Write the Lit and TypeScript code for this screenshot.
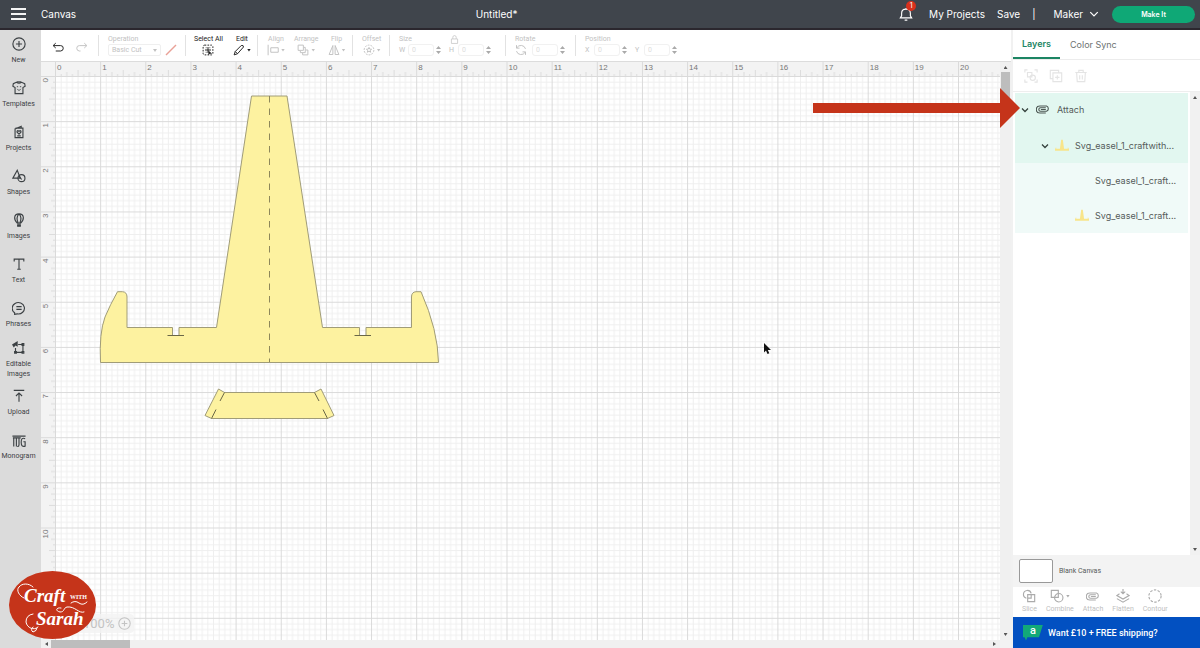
import { LitElement, html, svg, css, type TemplateResult } from "lit";
import { customElement, state } from "lit/decorators.js";
import { classMap } from "lit/directives/class-map.js";

/** Pixels per inch on the mat at the current zoom. */
const INCH = 45.15;

type Glyph = ReturnType<typeof svg>;

const icons: Record<string, Glyph> = {
  plus: svg`<circle cx="8" cy="8" r="7"/><path d="M8 4.500v7M4.500 8h7"/>`,
  shirt: svg`<path d="M5 1.500 1.500 3 1 6l2.500 1.500V14.500h9V7.500L15 6l-.5-3L11 1.500Q8 3.500 5 1.500Z"/><path d="M5.500 1h5"/><path d="M5.500 6.500h1.500M9 6.500h1.500M6 9l2 2 2-2" stroke-width="1"/>`,
  projects: svg`<path d="M4 3.500h8.500v11H3.500v-10l7-3v2"/><path d="M8 10.500 5.800 8.200q-.3-1.700 1-1.700L8 7.300l1.200-.8q1.300 0 1 1.700zM6 12.500h4"/>`,
  shapes: svg`<path d="M6 1.500 1 10.500h8.500z"/><circle cx="10.800" cy="10.500" r="4"/><path d="M8 8l3 4"/>`,
  images: svg`<path d="M8 1C1.500 1 2 8 6 11.500h4C14 8 14.500 1 8 1ZM8 1C5 4 5.500 8 7 11.500M8 1c3 3 2.500 7 1 10.500"/><path d="M6.500 13.500h3v1.500h-3z" fill="currentColor"/>`,
  text: svg`<path d="M2.500 5V2.500h11V5M8 2.500V14M6 14h4"/>`,
  phrases: svg`<path d="M3 13.500A7 6.500 0 1 1 6 14.700L3 15.300z"/><path d="M5 6.500h6M5 9.500h6"/>`,
  editable: svg`<path d="M7 4h5.500v9H4V8"/><path d="M0 4 6.500 0v6.500L4 5 2 7.500z" fill="currentColor" stroke="none"/><path d="M11.500 3h2v2h-2zM11.500 12h2v2h-2zM3 12h2v2H3z"/>`,
  upload: svg`<path d="M2 1.500h12M8 14.500V4.500M4.500 8 8 4.500 11.500 8"/>`,
  monogram: svg`<path d="M.5 3.500h15M1 5.500h9M2 5.500v10M5 5.500v10M8 5.500v8q0 2-2 2M15 6.500q-4.500-2-4.500 4t4.500 4.500v-5h-2"/>`,
  undo: svg`<path d="M5 1.500 1.500 4.800 5 8M2 4.800h9.500q3.500 0 3.500 3.500t-3.500 3.700H5"/>`,
  redo: svg`<path d="M11 1.500 14.500 4.800 11 8M14 4.800H4.500Q1 4.800 1 8.300T4.500 12H6"/>`,
  selectAll: svg`<rect x="1.500" y="1.500" width="13" height="13" rx="2" stroke-dasharray="2.200 1.600"/><path d="M8 4v8M4 8h8M5 5h1M10 5h1M5 11h1"/><path d="M8.500 8.500v6l2-1.500h3z" fill="currentColor" stroke="none"/>`,
  pencil: svg`<path d="M1.500 14.500 3 10 11 2q3-1 3 2L6 13zM3 10l3 3"/>`,
  align: svg`<path d="M1.500 1v14M5 5h10v6H5z"/>`,
  arrange: svg`<path d="M1.500 1.500h7v7h-7zM9 4.500h2v7H4.500V9M11.500 8h3v6.500h-7V12"/>`,
  flip: svg`<path d="M6.500 2 1.500 14h5zM9.500 2l5 12h-5z"/>`,
  offset: svg`<circle cx="8" cy="8" r="6.500" stroke-dasharray="2.500 1.500"/><path d="m8 4.500 1 2.300 2.500.2-1.900 1.600.6 2.400L8 9.700 5.800 11l.6-2.400L4.500 7 7 6.800z"/>`,
  lock: svg`<path d="M2.500 7h11v8h-11zM5 7V4q0-3 3-3t3 3v3"/>`,
  rotate: svg`<path d="M14 6.500A6.300 6.300 0 0 0 2.500 5M2 9.500A6.300 6.300 0 0 0 13.500 11M2 1.500V5.500h4M14 14.500v-4h-4"/>`,
  group: svg`<path d="M1 4V1h3M12 1h3v3M15 12v3h-3M4 15H1v-3"/><path d="M4 4h5v5H4z"/><circle cx="10" cy="10" r="3"/>`,
  duplicate: svg`<path d="M4.500 4.500h10v10h-10zM11 4V1.500H1.500V11H4M9.500 7v5M7 9.500h5"/>`,
  trash: svg`<path d="M1.500 4h13M5.500 4V1.500h5V4M3 4l.7 10.500h8.600L13 4M6.500 7v5M9.500 7v5"/>`,
  slice: svg`<path d="M5 10.500a4.500 4.500 0 1 1 5.500-5.500"/><path d="M6.500 6.500h8v8h-8zM6.500 10.500h4v-4"/>`,
  combine: svg`<path d="M1.500 1.500h8v8h-8z"/><circle cx="10" cy="10" r="4.800"/>`,
  flatten: svg`<path d="M8 0v5M5.500 3 8 5.500 10.500 3M4 5.500 1 7.500l7 4 7-4-3-2M1 11l7 4 7-4"/>`,
  contour: svg`<circle cx="8" cy="8" r="7" stroke-dasharray="2.800 1.600"/>`,
  chevron: svg`<path d="m2 5 6 6 6-6"/>`,
  bell: svg`<path d="M1.500 12.500h13L13 10V7Q13 2.500 8 2.500T3 7v3zM6.500 14.500q1.500 1.200 3 0M8 1v1"/>`,
};

const icon = (name: string, cls = "") => html`
  <svg class="icon ${cls}" viewBox="0 0 16 16" aria-hidden="true">${icons[name]}</svg>`;

const paperclip = () => html`
  <svg class="clip" viewBox="0 0 20 12" aria-hidden="true">
    <path d="M14 3.500H6.500a2.500 2.500 0 0 0 0 5h8.500a4 4 0 0 0 0-7.500H5.500a5 5 0 0 0 0 10H14M7 6h7"/>
  </svg>`;

const easelThumb = html`
  <svg class="thumb" viewBox="0 0 34 28" aria-hidden="true">
    <path d="M0 27V23L2 19h1v3h9L15 0h4L22 22h9v-3h1l2 4v4z"/>
  </svg>`;

const sideItems = [
  { name: "New", glyph: "plus" },
  { name: "Templates", glyph: "shirt" },
  { name: "Projects", glyph: "projects" },
  { name: "Shapes", glyph: "shapes" },
  { name: "Images", glyph: "images" },
  { name: "Text", glyph: "text" },
  { name: "Phrases", glyph: "phrases" },
  { name: "Editable Images", glyph: "editable" },
  { name: "Upload", glyph: "upload" },
  { name: "Monogram", glyph: "monogram" },
];

const layers = [
  { name: "Attach", depth: 0, open: true, art: "clip" },
  { name: "Svg_easel_1_craftwith...", depth: 1, open: true, art: "easel" },
  { name: "Svg_easel_1_craft...", depth: 2, open: false, art: "none" },
  { name: "Svg_easel_1_craft...", depth: 2, open: false, art: "easel" },
];

@customElement("app-root")
export class AppRoot extends LitElement {
  @state() private matWidth = 945;
  @state() private matHeight = 564;
  private observer?: ResizeObserver;

  static styles = css`
    :host {
      display: flex;
      flex-direction: column;
      position: relative;
      height: 100vh;
      overflow: hidden;
      background: #fff;
      color: #555b5a;
      font: 10px/14px Roboto, "Open Sans", sans-serif;
    }
    * { box-sizing: border-box; }
    button, input, select { font: inherit; color: inherit; margin: 0; padding: 0; border: 0; background: none; }
    a { color: inherit; text-decoration: none; }
    svg { display: block; flex: none; }
    .icon, .clip { width: 14px; height: 14px; fill: none; stroke: currentColor; stroke-width: 1.3; }
    .clip { width: 14px; height: 9px; stroke-width: 1.6; }

    header, .tabs, .layers { font-family: Inter, "Open Sans", sans-serif; }
    header {
      flex: none;
      display: flex;
      align-items: center;
      height: 30px;
      padding: 0 5px 0 11px;
      background: #40454c;
      border-bottom: 2px solid #2b272e;
      color: #fff;
    }
    .burger { display: flex; flex-direction: column; gap: 3px; width: 15px; margin-right: 15px; }
    .burger i { height: 2px; background: #f4f4f4; }
    h1, h2 { margin: 0; font: inherit; }
    h2 { flex: 1; text-align: center; padding-left: 18px; }
    .account { display: flex; align-items: center; gap: 12px; }
    .bell { position: relative; margin-right: 4px; color: #fff; }
    .count {
      position: absolute;
      left: 7px;
      top: -6px;
      width: 10px;
      height: 10px;
      border-radius: 5px;
      background: #d8301c;
      font-size: 7px;
      line-height: 10px;
      text-align: center;
    }
    .machine { display: flex; align-items: center; gap: 6px; margin: 0 1px 0 6px; }
    .machine .icon { width: 10px; height: 10px; stroke-width: 2; }
    .make {
      width: 83px;
      height: 17px;
      border-radius: 9px;
      background: #0fa876;
      font-size: 7px;
      line-height: 17px;
      font-weight: 600;
    }

    .body { flex: 1; min-height: 0; display: flex; }
    nav { flex: none; width: 41px; background: #dbdbdb; color: #3c4144; }
    .side {
      display: flex;
      flex-direction: column;
      align-items: center;
      gap: 4px;
      width: 37px;
      padding: 7px 0 9px;
      font-size: 7px;
      line-height: 10px;
      text-align: center;
    }
    .side.double { padding: 3px 0; }

    main { flex: 1; min-width: 0; display: flex; flex-direction: column; }
    .toolbar {
      flex: none;
      display: flex;
      align-items: center;
      height: 31px;
      color: #c2c2c2;
      font-size: 7px;
      line-height: 8px;
      overflow: hidden;
    }
    .section {
      flex: none;
      display: flex;
      align-items: stretch;
      height: 21px;
      padding-left: 9px;
      border-right: 1px solid #e2e2e2;
    }
    .section:last-child { border: 0; }
    .history { width: 58px; padding-left: 11px; gap: 12px; align-items: center; }
    .history .icon { width: 12px; height: 12px; margin-top: 4px; }
    .operation { width: 87px; }
    .selection { width: 72px; gap: 10px; padding-left: 8px; }
    .layout { width: 95px; gap: 9px; }
    .offsets { width: 37px; }
    .size { width: 116px; }
    .rotation { width: 70px; }
    .on { color: #222; }
    .tool { display: flex; flex-direction: column; align-items: center; justify-content: space-between; gap: 1px; }
    .tool.start { align-items: flex-start; }
    .tool .icon, .fields .icon { width: 12px; height: 12px; }
    .glyph { display: flex; align-items: center; gap: 2px; height: 12px; }
    .caret {
      width: 4px;
      height: 3px;
      background: currentColor;
      clip-path: polygon(0 0, 100% 0, 50% 100%);
    }
    .pick { display: flex; align-items: center; gap: 4px; height: 12px; }
    .drop { position: relative; }
    .drop .caret { position: absolute; right: 4px; top: 5px; pointer-events: none; }
    select {
      display: block;
      appearance: none;
      width: 53px;
      height: 12px;
      padding-left: 3px;
      border: 1px solid #efefef;
      border-radius: 2px;
    }
    .pen { width: 12px; height: 12px; stroke: #e9a197; stroke-width: 1.5; }
    .fields { display: flex; align-items: center; gap: 3px; height: 12px; }
    .fields label { width: 6px; }
    .fields label + .num { margin-right: 5px; }
    .fields .icon { margin-right: 2px; }
    .num { display: flex; align-items: center; gap: 2px; }
    input {
      width: 26px;
      height: 12px;
      padding-left: 3px;
      border: 1px solid #f1f1f1;
      border-radius: 3px;
      color: #ddd;
    }
    .steps { width: 5px; height: 8px; fill: #aaa; }
    .sizehead { display: flex; gap: 38px; height: 8px; }
    .sizehead .icon { width: 9px; height: 9px; }

    .workspace {
      flex: 1;
      min-height: 0;
      position: relative;
      display: grid;
      grid-template: 14px minmax(0, 1fr) 8px / 14px minmax(0, 1fr) 11px;
      border-top: 1px solid #dcdcdc;
      background: #f3f3f3;
    }
    .ruler, .mat { width: 100%; height: 100%; overflow: hidden; }
    .ruler text { fill: #777; font: 8px "Liberation Sans", Arial, sans-serif; }
    .mat { background: #fff; }
    .fine { fill: none; stroke: #efefef; }
    .inch { fill: none; stroke: #dadada; }
    .tick { fill: none; stroke: #dcdcdc; }
    .paper { fill: #fdf2a0; stroke: #a09c78; }
    .fold { fill: none; stroke: #8d875a; stroke-dasharray: 6.5 6; }
    .slit { fill: none; stroke: #6a6746; }
    .vbar, .hbar { display: flex; align-items: center; justify-content: space-between; background: #f0f0f0; }
    .vbar { grid-area: 1 / 3 / 3 / 4; flex-direction: column; padding: 4px 0; }
    .hbar { grid-area: 3 / 1 / 4 / 3; padding: 0 4px; }
    .vthumb { width: 9px; height: 26px; margin: 3px 0 auto; background: #bdbdbd; }
    .hthumb { width: 79px; height: 8px; margin: 0 auto 0 3px; background: #bdbdbd; }
    .arrow { width: 4px; height: 3px; background: #555; }
    .up { clip-path: polygon(50% 0, 100% 100%, 0 100%); }
    .down { clip-path: polygon(0 0, 100% 0, 50% 100%); }
    .left, .right { width: 3px; height: 4px; }
    .left { clip-path: polygon(100% 0, 100% 100%, 0 50%); }
    .right { clip-path: polygon(0 0, 100% 50%, 0 100%); }
    .zoom {
      position: absolute;
      left: 20px;
      bottom: 15px;
      display: flex;
      align-items: center;
      gap: 4px;
      height: 19px;
      padding: 0 3px 0 22px;
      border-radius: 4px;
      background: #f2f2f2cc;
      color: #c3c3c3;
      font-size: 13px;
    }
    .zoom .icon { width: 13px; height: 13px; }
    .pointer { position: absolute; left: 722px; top: 281px; width: 8px; height: 12px; }

    aside {
      flex: none;
      display: flex;
      flex-direction: column;
      width: 189px;
      border-left: 2px solid #f1f1f1;
    }
    .tabs { flex: none; display: flex; height: 30px; border-bottom: 1px solid #ececec; }
    .tabs button { padding: 0 10px; line-height: 28px; font-size: 9px; color: #6d7271; }
    .tabs .current { color: #1c8563; font-weight: 600; border-bottom: 2px solid #1c8563; width: 47px; padding: 0; }
    .edit { flex: none; display: flex; align-items: center; gap: 11px; height: 31px; padding: 0 11px; color: #e4e4e4; }
    .layers { flex: 1; min-height: 0; display: flex; border-top: 1px solid #eee; font-size: 9px; }
    ul { flex: 1; min-width: 0; margin: 0; padding: 1px 2px 0 2px; list-style: none; }
    li {
      display: flex;
      align-items: center;
      gap: 7px;
      height: 35px;
      padding: 0 6px;
      background: #f0faf8;
    }
    li.shade { background: #e2f7f0; }
    li.d0 { padding-bottom: 2px; }
    li.d1 { padding-left: 26px; gap: 6px; }
    li.d2 { padding-left: 60px; gap: 6px; }
    li .icon { width: 8px; height: 8px; stroke-width: 2.5; color: #34403c; }
    li .clip { color: #4c5753; }
    .name { flex: 1; white-space: nowrap; }
    .thumb { width: 14px; height: 13px; fill: #f8e58a; }
    .blank { width: 14px; flex: none; }
    .lbar {
      flex: none;
      display: flex;
      flex-direction: column;
      justify-content: space-between;
      align-items: center;
      width: 10px;
      padding: 4px 0;
      background: #f1f1f1;
    }
    .canvascolor {
      flex: none;
      display: flex;
      align-items: center;
      gap: 6px;
      height: 32px;
      padding-left: 6px;
      background: #f3f3f3;
      font-size: 7px;
    }
    .swatch { width: 34px; height: 24px; border: 1px solid #999; border-radius: 2px; background: #fff; }
    .actions {
      flex: none;
      display: flex;
      gap: 9px;
      height: 30px;
      padding: 2px 0 0 9px;
      font-size: 7px;
      line-height: 10px;
    }
    .actions button { display: flex; flex-direction: column; align-items: center; gap: 1px; color: #c0c0c0; }
    .actions .glyph { height: 14px; color: #ababab; }
    .promo {
      flex: none;
      display: flex;
      align-items: center;
      gap: 5px;
      height: 31px;
      padding-left: 10px;
      background: #0250c1;
      color: #fff;
      font-size: 9px;
      font-weight: 500;
    }
    .flag {
      width: 20px;
      height: 16px;
      background: #12a979;
      clip-path: polygon(0 0, 100% 0, 80% 80%, 22% 80%, 15% 100%, 8% 80%, 0 80%);
      font-size: 11px;
      line-height: 12px;
      text-align: center;
    }

    .callout { position: absolute; top: 88px; right: 180px; width: 207px; height: 40px; fill: #c5341a; }
    .brand { position: absolute; left: 9px; bottom: 9px; width: 87px; height: 68px; }
    .brand text { fill: #fff; font-family: "Liberation Serif", serif; font-style: italic; font-weight: 700; }
    .brand .small { font-style: normal; }
    .swash { fill: none; stroke: #fff; stroke-width: 1; stroke-linecap: round; }
  `;

  firstUpdated() {
    const mat = this.renderRoot.querySelector(".mat")!;
    this.observer = new ResizeObserver(([entry]) => {
      this.matWidth = entry.contentRect.width;
      this.matHeight = entry.contentRect.height;
    });
    this.observer.observe(mat);
  }

  disconnectedCallback() {
    super.disconnectedCallback();
    this.observer?.disconnect();
  }

  private inches(length: number) {
    return Array.from({ length: Math.ceil((length - 12) / INCH) }, (_, i) => i);
  }

  private gridPath(horizontal: boolean) {
    return Array.from({ length: 7 }, (_, i) => {
      const at = ((i + 1) * INCH) / 8;
      return horizontal ? `M0 ${at}H${INCH}` : `M${at} 0V${INCH}`;
    }).join("");
  }

  private num(id: string, label: string): TemplateResult {
    return html`
      <span class="num">
        <input id=${id} aria-label=${label} value="0" inputmode="decimal" />
        <svg class="steps" viewBox="0 0 5 8" aria-hidden="true"><path d="M0 3 2.500 0 5 3zM0 5l2.500 3L5 5z"/></svg>
      </span>`;
  }

  private tool(label: string, glyph: string, caret = true, cls = "") {
    return html`
      <button class="tool ${cls}">
        <span>${label}</span>
        <span class="glyph">${icon(glyph)}${caret ? html`<i class="caret"></i>` : ""}</span>
      </button>`;
  }

  private renderHeader() {
    return html`
      <header>
        <button class="burger" aria-label="Menu"><i></i><i></i><i></i></button>
        <h1>Canvas</h1>
        <h2>Untitled*</h2>
        <div class="account">
          <button class="bell" aria-label="Notifications">${icon("bell")}<span class="count">1</span></button>
          <a href="#projects">My Projects</a>
          <a href="#save">Save</a>
          <span>|</span>
          <button class="machine">Maker ${icon("chevron")}</button>
          <button class="make">Make It</button>
        </div>
      </header>`;
  }

  private renderToolbar() {
    return html`
      <div class="toolbar">
        <div class="section history">
          <button class="on" aria-label="Undo">${icon("undo")}</button>
          <button aria-label="Redo">${icon("redo")}</button>
        </div>
        <div class="section operation">
          <div class="tool start">
            <label for="operation">Operation</label>
            <div class="pick">
              <div class="drop">
                <select id="operation"><option>Basic Cut</option></select>
                <i class="caret"></i>
              </div>
              <svg class="pen" viewBox="0 0 12 12" aria-hidden="true"><path d="M1 11 11 1"/></svg>
            </div>
          </div>
        </div>
        <div class="section selection">
          ${this.tool("Select All", "selectAll", false, "on")}
          ${this.tool("Edit", "pencil", true, "on")}
        </div>
        <div class="section layout">
          ${this.tool("Align", "align")} ${this.tool("Arrange", "arrange")} ${this.tool("Flip", "flip")}
        </div>
        <div class="section offsets">${this.tool("Offset", "offset")}</div>
        <div class="section size">
          <div class="tool start">
            <div class="sizehead"><span>Size</span>${icon("lock")}</div>
            <div class="fields">
              <label for="w">W</label>${this.num("w", "Width")}
              <label for="h">H</label>${this.num("h", "Height")}
            </div>
          </div>
        </div>
        <div class="section rotation">
          <div class="tool start">
            <label for="r">Rotate</label>
            <div class="fields">${icon("rotate")}${this.num("r", "Rotate")}</div>
          </div>
        </div>
        <div class="section">
          <div class="tool start">
            <span>Position</span>
            <div class="fields">
              <label for="x">X</label>${this.num("x", "X position")}
              <label for="y">Y</label>${this.num("y", "Y position")}
            </div>
          </div>
        </div>
      </div>`;
  }

  private renderWorkspace() {
    const eighths = [1, 2, 3, 4, 5, 6, 7];
    return html`
      <div class="workspace">
        <span></span>
        <svg class="ruler">
          <pattern id="across" width=${INCH} height="14" patternUnits="userSpaceOnUse">
            <path class="inch" d="M.5 0V14"/>
            <path class="tick" d=${eighths.map((n) => `M${(n * INCH) / 8 + 0.5} ${n === 4 ? 8 : n % 2 ? 12 : 10}V14`).join("")}/>
          </pattern>
          <rect width="100%" height="100%" fill="url(#across)"/>
          ${this.inches(this.matWidth).map((n) => svg`<text x=${n * INCH + 2} y="8">${n}</text>`)}
        </svg>
        <svg class="ruler">
          <pattern id="along" width="14" height=${INCH} patternUnits="userSpaceOnUse">
            <path class="inch" d="M0 .5H14"/>
            <path class="tick" d=${eighths.map((n) => `M${n === 4 ? 8 : n % 2 ? 12 : 10} ${(n * INCH) / 8 + 0.5}H14`).join("")}/>
          </pattern>
          <rect width="100%" height="100%" fill="url(#along)"/>
          ${this.inches(this.matHeight).map(
            (n) => svg`<text text-anchor="end" transform="translate(7 ${n * INCH + 2}) rotate(-90)">${n}</text>`,
          )}
        </svg>
        <svg class="mat" role="img" aria-label="Easel design on the canvas">
          <pattern id="inches" width=${INCH} height=${INCH} patternUnits="userSpaceOnUse">
            <path class="fine" d=${this.gridPath(true) + this.gridPath(false)} transform="translate(.5 .5)"/>
            <path class="inch" d="M0 .5H46M.5 0V46"/>
          </pattern>
          <rect width="100%" height="100%" fill="url(#inches)"/>
          <g transform="translate(-55 -76)">
            <path class="paper" d="M100.500 362.500Q99 333 105 317 110 305 117.500 291.700H122.500Q127 292 127 297V327.500H172.500V335.500H179V327.500H216.500L251.500 96H287L322.500 327.500H359.500V335.500H366V327.500H411.500V297Q411.500 292 416 291.700H421Q438 330 438.500 362.500Z"/>
            <path class="fold" d="M269.500 96V362"/>
            <path class="slit" d="M167.500 335.500H184M354.500 335.500H371"/>
            <path class="paper" d="M218.500 389 224.500 392.500H314.500L321 389 334 415.500 327.500 418.500H211.500L205 415.500Z"/>
            <path class="slit" d="M224.500 392.500 220 401M211.500 418.500 216 409.500M314.500 392.500 319 401M327.500 418.500 323 409.500"/>
          </g>
        </svg>
        <div class="vbar"><i class="arrow up"></i><i class="vthumb"></i><i class="arrow down"></i></div>
        <div class="hbar"><i class="arrow left"></i><i class="hthumb"></i><i class="arrow right"></i></div>
        <div class="zoom"><span>100%</span><button aria-label="Zoom in">${icon("plus")}</button></div>
        <svg class="pointer" viewBox="0 0 8 12" aria-hidden="true">
          <path d="M1 0v9.500l2-2L4.500 11l1.800-.8L4.800 7H8z" fill="#111"/>
        </svg>
      </div>`;
  }

  private renderPanel() {
    return html`
      <aside>
        <div class="tabs">
          <button class="current">Layers</button>
          <button>Color Sync</button>
        </div>
        <div class="edit">
          <button aria-label="Group">${icon("group")}</button>
          <button aria-label="Duplicate">${icon("duplicate")}</button>
          <button aria-label="Delete">${icon("trash")}</button>
        </div>
        <div class="layers">
          <ul>
            ${layers.map(
              (layer) => html`
                <li class=${classMap({ shade: layer.depth < 2, [`d${layer.depth}`]: true })}>
                  ${layer.open ? icon("chevron") : ""}
                  ${layer.art === "clip" ? paperclip() : layer.art === "easel" ? easelThumb : html`<i class="blank"></i>`}
                  <span class="name">${layer.name}</span>
                </li>`,
            )}
          </ul>
          <div class="lbar"><i class="arrow up"></i><i class="arrow down"></i></div>
        </div>
        <div class="canvascolor"><button class="swatch" aria-label="Canvas color"></button><span>Blank Canvas</span></div>
        <div class="actions">
          <button><span class="glyph">${icon("slice")}</span>Slice</button>
          <button><span class="glyph">${icon("combine")}<i class="caret"></i></span>Combine</button>
          <button><span class="glyph">${paperclip()}</span>Attach</button>
          <button><span class="glyph">${icon("flatten")}</span>Flatten</button>
          <button><span class="glyph">${icon("contour")}</span>Contour</button>
        </div>
        <a class="promo" href="#offer"><span class="flag">a</span>Want £10 + FREE shipping?</a>
      </aside>`;
  }

  render() {
    return html`
      ${this.renderHeader()}
      <div class="body">
        <nav>
          ${sideItems.map(
            (item) => html`
              <button class=${classMap({ side: true, double: item.name.includes(" ") })}>
                ${icon(item.glyph)}<span>${item.name}</span>
              </button>`,
          )}
        </nav>
        <main>${this.renderToolbar()} ${this.renderWorkspace()}</main>
        ${this.renderPanel()}
      </div>
      <svg class="callout" viewBox="0 0 207 40" aria-hidden="true"><path d="M0 15H187V0L207 20 187 40V25H0z"/></svg>
      <svg class="brand" viewBox="0 0 87 68">
        <ellipse cx="43.500" cy="34" rx="43.500" ry="34" fill="#c5341a"/>
        <text x="15" y="31" font-size="19">Craft</text>
        <text class="small" x="61" y="28" font-size="6">WITH</text>
        <text x="27" y="54" font-size="19">Sarah</text>
        <path class="swash" d="M15 27C10 25 7 19 10 16 13 12 20 12 24 16M62 32q4-3 8 0t8-1M29 56c-4 4-11 1-12-5q0-7 7-8M24 56q-3 3 0 5 4-1 4-4M75 41C70 43 66 35 58 36 54 37 56 41 51 41 46 40 47 36 52 37"/>
      </svg>`;
  }
}
